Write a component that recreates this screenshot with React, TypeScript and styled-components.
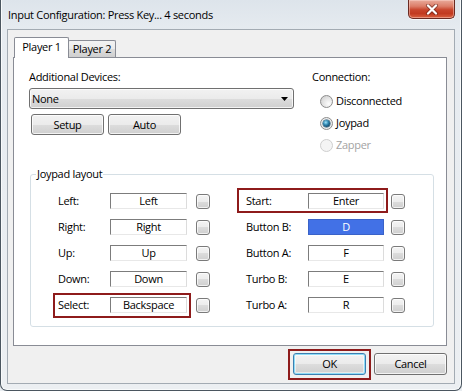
import React from "react";
import styled, { createGlobalStyle } from "styled-components";

const GlobalStyle = createGlobalStyle`
  html, body { margin: 0; padding: 0; background: #e9edf1; }
  body {
    font-family: "Open Sans", "Noto Sans", sans-serif;
    font-size: 11px;
    letter-spacing: -0.3px;
    color: #000;
  }
  * { box-sizing: border-box; }
`;

const Window = styled.div`
  width: 462px;
  height: 391px;
  display: flex;
  flex-direction: column;
  padding: 0 6px 6px;
  border: 1px solid #4b5660;
  border-top: none;
  border-radius: 0 0 7px 7px;
  background: linear-gradient(180deg, #dde4eb 0px, #e6ebf0 30px, #eceff2 100%);
  box-shadow: inset 1px 0 0 #f8fafb, inset -1px 0 0 #f8fafb, inset 0 -1px 0 #f8fafb;
  overflow: hidden;
`;

const TitleBar = styled.div`
  height: 29px;
  flex: none;
  display: flex;
  align-items: flex-start;
`;

const Title = styled.div`
  flex: 1;
  padding: 7px 0 0 1px;
  line-height: 16px;
  color: #000;
`;

const CloseButton = styled.div`
  width: 47px;
  height: 19px;
  display: flex;
  align-items: center;
  justify-content: center;
  border: 1px solid #6a2a22;
  border-top: none;
  border-radius: 0 0 5px 5px;
  background: linear-gradient(180deg, #e9ab9b 0%, #dc7d68 35%, #c8442b 55%, #c23a20 75%, #d9603f 100%);
  box-shadow: inset 0 0 0 1px rgba(255, 220, 210, 0.45), 0 1px 0 rgba(255, 255, 255, 0.7);
`;

const Client = styled.div`
  flex: 1;
  display: flex;
  flex-direction: column;
  padding: 7px 7px 0 5px;
  background: #f0f0f0;
  border: 1px solid #a3abb3;
`;

const TabStrip = styled.div`
  height: 20px;
  flex: none;
  display: flex;
  align-items: flex-end;
  padding-left: 1px;
`;

const Tab = styled.div<{ $selected?: boolean; $w: number }>`
  position: relative;
  z-index: ${(p) => (p.$selected ? 2 : 1)};
  width: ${(p) => p.$w}px;
  height: ${(p) => (p.$selected ? 21 : 17)}px;
  margin-bottom: ${(p) => (p.$selected ? -1 : 0)}px;
  margin-left: ${(p) => (p.$selected ? 0 : -1)}px;
  padding-bottom: ${(p) => (p.$selected ? 2 : 0)}px;
  display: flex;
  align-items: center;
  justify-content: center;
  line-height: 16px;
  border: 1px solid #898c95;
  border-bottom: none;
  border-radius: 2px 2px 0 0;
  background: ${(p) =>
    p.$selected
      ? "#ffffff"
      : "linear-gradient(180deg, #f3f3f3 0%, #ebebeb 50%, #dddddd 50%, #cfcfcf 100%)"};
`;

const Panel = styled.div`
  height: 289px;
  flex: none;
  display: flex;
  flex-direction: column;
  padding: 11px 0 0 15px;
  background: #ffffff;
  border: 1px solid #898c95;
`;

const TopSection = styled.div`
  display: flex;
`;

const LeftCol = styled.div`
  width: 265px;
  display: flex;
  flex-direction: column;
`;

const RightCol = styled.div`
  margin-left: 18px;
  display: flex;
  flex-direction: column;
`;

const Caption = styled.div`
  line-height: 16px;
`;

const Combo = styled.div`
  margin-top: 3px;
  height: 21px;
  display: flex;
  align-items: center;
  justify-content: space-between;
  padding: 0 5px 0 2px;
  border: 1px solid #707070;
  border-radius: 3px;
  background: linear-gradient(180deg, #f2f2f2 0%, #ebebeb 50%, #dddddd 50%, #cfcfcf 100%);
  box-shadow: inset 0 0 0 1px rgba(255, 255, 255, 0.75);
`;

const SmallButtons = styled.div`
  display: flex;
  gap: 4px;
  margin-top: 5px;
  padding-left: 2px;
`;

const PushButton = styled.div<{ $w?: number; $h?: number; $default?: boolean }>`
  width: ${(p) => p.$w ?? 73}px;
  height: ${(p) => p.$h ?? 21}px;
  display: flex;
  align-items: center;
  justify-content: center;
  line-height: 16px;
  border: 1px solid ${(p) => (p.$default ? "#3c7fb1" : "#707070")};
  border-radius: 3px;
  background: linear-gradient(180deg, #f2f2f2 0%, #ebebeb 50%, #dddddd 50%, #cfcfcf 100%);
  box-shadow: ${(p) =>
    p.$default
      ? "inset 0 0 0 1px #8fdcf7, inset 0 0 0 2px rgba(255,255,255,0.5)"
      : "inset 0 0 0 1px rgba(255, 255, 255, 0.75)"};
`;

const RadioList = styled.div`
  margin-top: 5px;
  padding-left: 8px;
  display: flex;
  flex-direction: column;
`;

const RadioItem = styled.div<{ $disabled?: boolean }>`
  height: 22px;
  display: flex;
  align-items: center;
  gap: 3px;
  line-height: 16px;
  color: ${(p) => (p.$disabled ? "#a3a3a3" : "#000")};
`;

const RadioCircle = styled.span<{ $checked?: boolean; $disabled?: boolean }>`
  position: relative;
  width: 13px;
  height: 13px;
  flex: none;
  border-radius: 50%;
  border: 1px solid ${(p) => (p.$disabled ? "#cfcfcf" : "#8d8d8d")};
  background: ${(p) =>
    p.$disabled
      ? "#f4f4f4"
      : p.$checked
      ? "radial-gradient(circle at 50% 50%, #ffffff 0%, #f0f0f0 60%, #d8d8d8 100%)"
      : "radial-gradient(circle at 70% 70%, #fdfdfd 0%, #e2e2e2 55%, #c6c6c6 100%)"};
  &::after {
    content: "";
    display: ${(p) => (p.$checked ? "block" : "none")};
    position: absolute;
    left: 2px;
    top: 2px;
    width: 7px;
    height: 7px;
    border-radius: 50%;
    background: radial-gradient(circle at 40% 35%, #9ee3fb 0%, #2f86b0 40%, #0d3e60 80%);
    box-shadow: 0 0 0 0.5px #1b4a66;
  }
`;

const Group = styled.fieldset`
  margin: 10px 0 0 1px;
  width: 404px;
  padding: 0;
  min-width: 0;
  border: 1px solid #d5dfe5;
  border-radius: 3px;
`;

const GroupLegend = styled.legend`
  margin-left: 5px;
  padding: 0 1px;
  line-height: 16px;
`;

const MapGrid = styled.div`
  display: flex;
  gap: 36px;
  padding: 11px 0 13px 27px;
`;

const MapColumn = styled.div`
  display: flex;
  flex-direction: column;
  gap: 10px;
`;

const MapRow = styled.div`
  height: 16px;
  display: flex;
  align-items: center;
`;

const MapGroup = styled.div`
  display: flex;
  align-items: center;
`;

const Highlight = styled.div<{ $l: number; $t: number; $r: number; $b: number }>`
  display: flex;
  align-items: center;
  border: 2px solid #8e1b1b;
  margin: ${(p) => `-${p.$t}px -${p.$r}px -${p.$b}px -${p.$l}px`};
  padding: ${(p) => `${p.$t - 2}px ${p.$r - 2}px ${p.$b - 2}px ${p.$l - 2}px`};
`;

const KeyLabel = styled.span<{ $w: number }>`
  width: ${(p) => p.$w}px;
  line-height: 16px;
`;

const KeyField = styled.div<{ $w: number; $active?: boolean }>`
  width: ${(p) => p.$w}px;
  height: 16px;
  line-height: 14px;
  text-align: center;
  border: 1px solid;
  border-color: ${(p) => (p.$active ? "#3a62c8" : "#7c7c7c #dcdcdc #e8e8e8 #7c7c7c")};
  background: ${(p) => (p.$active ? "#4271e6" : "#ffffff")};
  color: ${(p) => (p.$active ? "#ffffff" : "#000")};
`;

const CheckButton = styled.div<{ $gap: number }>`
  width: 14px;
  height: 15px;
  margin-left: ${(p) => p.$gap}px;
  border: 1px solid #7a7a7a;
  border-radius: 3px;
  background: linear-gradient(180deg, #f4f4f4 0%, #ececec 50%, #dcdcdc 50%, #cfcfcf 100%);
  box-shadow: inset 0 0 0 1px rgba(255, 255, 255, 0.7);
`;

const ButtonBar = styled.div`
  margin-top: 7px;
  height: 22px;
  display: flex;
  align-items: flex-start;
  justify-content: flex-end;
  gap: 8px;
`;

type Mapping = { label: string; value: string; active?: boolean; hl?: [number, number, number, number] };

const leftMap: Mapping[] = [
  { label: "Left:", value: "Left" },
  { label: "Right:", value: "Right" },
  { label: "Up:", value: "Up" },
  { label: "Down:", value: "Down" },
  { label: "Select:", value: "Backspace", hl: [5, 4, 4, 5] },
];

const rightMap: Mapping[] = [
  { label: "Start:", value: "Enter", hl: [9, 5, 4, 4] },
  { label: "Button B:", value: "D", active: true },
  { label: "Button A:", value: "F" },
  { label: "Turbo B:", value: "E" },
  { label: "Turbo A:", value: "R" },
];

function Column({ items, labelW, fieldW, gap }: { items: Mapping[]; labelW: number; fieldW: number; gap: number }) {
  return (
    <MapColumn>
      {items.map((m) => {
        const inner = (
          <>
            <KeyLabel $w={labelW}>{m.label}</KeyLabel>
            <KeyField $w={fieldW} $active={m.active}>
              {m.value}
            </KeyField>
          </>
        );
        return (
          <MapRow key={m.label}>
            {m.hl ? (
              <Highlight $l={m.hl[0]} $t={m.hl[1]} $r={m.hl[2]} $b={m.hl[3]}>
                {inner}
              </Highlight>
            ) : (
              <MapGroup>{inner}</MapGroup>
            )}
            <CheckButton $gap={gap} />
          </MapRow>
        );
      })}
    </MapColumn>
  );
}

const CloseGlyph = () => (
  <svg width="14" height="11" viewBox="0 0 14 11">
    <path d="M3 1.5 L11 9.5 M11 1.5 L3 9.5" stroke="#5a1e16" strokeWidth="4" strokeLinecap="round" opacity="0.55" />
    <path d="M3 1.5 L11 9.5 M11 1.5 L3 9.5" stroke="#ffffff" strokeWidth="2.2" strokeLinecap="round" />
  </svg>
);

const ComboArrow = () => (
  <svg width="7" height="4" viewBox="0 0 7 4">
    <path d="M0 0 H7 L3.5 4 Z" fill="#000" />
  </svg>
);

export default function App() {
  return (
    <>
      <GlobalStyle />
      <Window>
        <TitleBar>
          <Title>Input Configuration: Press Key... 4 seconds</Title>
          <CloseButton>
            <CloseGlyph />
          </CloseButton>
        </TitleBar>
        <Client>
          <TabStrip>
            <Tab $selected $w={55}>Player 1</Tab>
            <Tab $w={48}>Player 2</Tab>
          </TabStrip>
          <Panel>
            <TopSection>
              <LeftCol>
                <Caption>Additional Devices:</Caption>
                <Combo>
                  <span>None</span>
                  <ComboArrow />
                </Combo>
                <SmallButtons>
                  <PushButton>Setup</PushButton>
                  <PushButton>Auto</PushButton>
                </SmallButtons>
              </LeftCol>
              <RightCol>
                <Caption>Connection:</Caption>
                <RadioList>
                  <RadioItem>
                    <RadioCircle />
                    Disconnected
                  </RadioItem>
                  <RadioItem>
                    <RadioCircle $checked />
                    Joypad
                  </RadioItem>
                  <RadioItem $disabled>
                    <RadioCircle $disabled />
                    Zapper
                  </RadioItem>
                </RadioList>
              </RightCol>
            </TopSection>
            <Group>
              <GroupLegend>Joypad layout</GroupLegend>
              <MapGrid>
                <Column items={leftMap} labelW={52} fieldW={77} gap={9} />
                <Column items={rightMap} labelW={62} fieldW={76} gap={7} />
              </MapGrid>
            </Group>
          </Panel>
          <ButtonBar>
            <Highlight $l={5} $t={4} $r={5} $b={5}>
              <PushButton $default $h={22}>OK</PushButton>
            </Highlight>
            <PushButton $h={22}>Cancel</PushButton>
          </ButtonBar>
        </Client>
      </Window>
    </>
  );
}
